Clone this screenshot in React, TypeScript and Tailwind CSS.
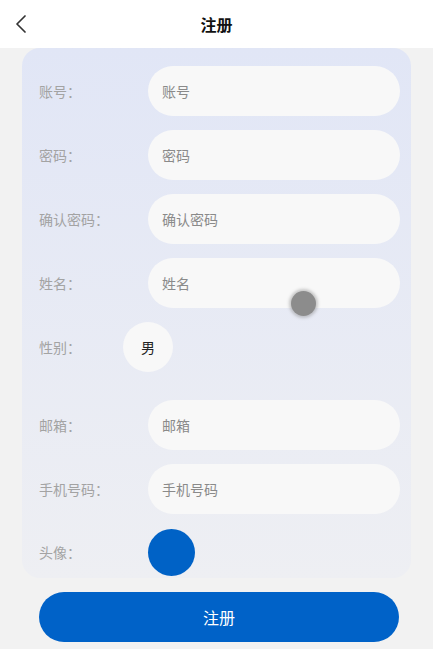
import { ChevronLeft } from "lucide-react";

const fields = [
  { label: "账号：", placeholder: "账号" },
  { label: "密码：", placeholder: "密码" },
  { label: "确认密码：", placeholder: "确认密码" },
  { label: "姓名：", placeholder: "姓名" },
];

const moreFields = [
  { label: "邮箱：", placeholder: "邮箱" },
  { label: "手机号码：", placeholder: "手机号码" },
];

const Field = ({ label, placeholder }: { label: string; placeholder: string }) => (
  <div className="flex items-center h-[50px]">
    <span className="w-[109px] text-[14px] text-[#a3a3a3]">{label}</span>
    <div className="flex-1 h-[50px] rounded-full bg-[#f8f8f8] flex items-center px-[14px] text-[14px] text-[#8a8a8a]">
      {placeholder}
    </div>
  </div>
);

const App = () => {
  return (
    <div
      className="relative w-[433px] h-[649px] bg-[#f2f2f2] overflow-hidden"
      style={{ fontFamily: '"Noto Sans CJK SC", "Noto Sans", sans-serif' }}
    >
      <header className="h-[48px] bg-white flex items-center justify-center relative">
        <ChevronLeft className="absolute left-[5px] top-[8px] w-[32px] h-[32px] text-[#333]" strokeWidth={1.3} />
        <h1 className="text-[16px] font-bold text-[#111]">注册</h1>
      </header>

      <section className="mx-[22px] rounded-[18px] bg-gradient-to-b from-[#e1e6f6] to-[#eeeff3] pt-[18px] pb-[2px] pl-[17px] pr-[11px]">
        <div className="flex flex-col gap-[14px]">
          {fields.map((f) => (
            <Field key={f.label} {...f} />
          ))}
          <div className="flex items-center h-[50px] mb-[14px]">
            <span className="w-[84px] text-[14px] text-[#a3a3a3]">性别：</span>
            <div className="w-[50px] h-[50px] rounded-full bg-[#f8f8f8] flex items-center justify-center text-[14px] text-[#222]">
              男
            </div>
          </div>
          {moreFields.map((f) => (
            <Field key={f.label} {...f} />
          ))}
          <div className="flex items-center h-[48px]">
            <span className="w-[109px] text-[14px] text-[#a3a3a3]">头像：</span>
            <div className="w-[47px] h-[47px] rounded-full bg-[#0062c6]" />
          </div>
        </div>
      </section>

      <button className="block ml-[39px] mt-[14px] w-[360px] h-[50px] rounded-full bg-[#0062c8] text-white text-[16px]">
        注册
      </button>

      <div className="absolute left-[291px] top-[291px] w-[25px] h-[25px] rounded-full bg-[#8c8c8c] shadow-[0_0_3px_2px_rgba(140,140,140,0.45)]" />
    </div>
  );
};

export default App;
